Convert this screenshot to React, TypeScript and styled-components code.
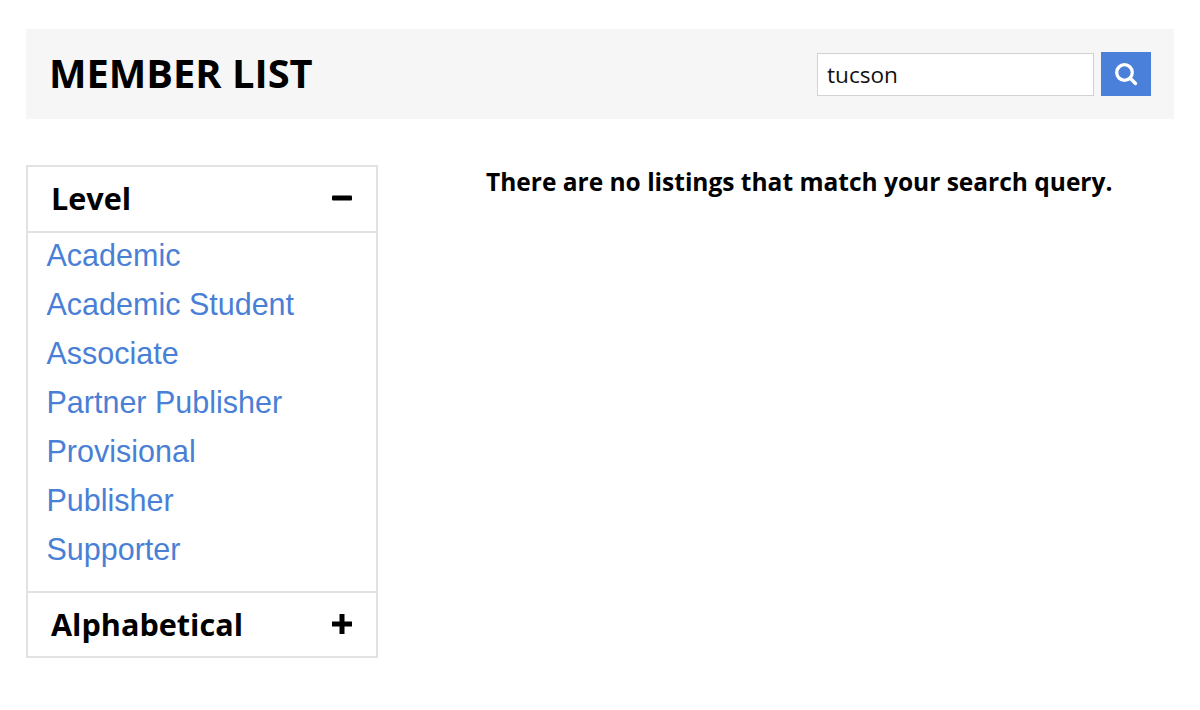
import React from "react";
import styled, { createGlobalStyle } from "styled-components";

const Global = createGlobalStyle`
  html, body { margin: 0; padding: 0; background: #fff; }
  body { width: 1200px; height: 710px; overflow: hidden; font-family: "Open Sans", sans-serif; }
`;
const Page = styled.div`
  padding: 29px 26px 0;
  box-sizing: border-box;
`;
const Header = styled.header`
  height: 90px;
  background: #f6f6f6;
  display: flex;
  align-items: center;
  justify-content: space-between;
  padding: 0 23px 0 23px;
`;
const Title = styled.h1`
  margin: 0 0 2px;
  font-size: 39.8px;
  line-height: 50px;
  font-weight: 700;
  color: #000;
`;
const Search = styled.form`
  display: flex;
  align-items: center;
  gap: 7px;
`;
const SearchInput = styled.input`
  width: 277px;
  height: 43px;
  box-sizing: border-box;
  border: 1px solid #d2d2d2;
  background: #fff;
  padding: 0 9px;
  font: 400 22.6px "Open Sans", sans-serif;
  color: #111;
  outline: none;
`;
const SearchButton = styled.button`
  width: 50px;
  height: 44px;
  border: 0;
  padding: 0;
  background: #4a80d9;
  display: flex;
  align-items: center;
  justify-content: center;
`;
const Columns = styled.div`
  display: flex;
  align-items: flex-start;
  margin-top: 46px;
`;
const Sidebar = styled.aside`
  width: 352px;
  box-sizing: border-box;
  border: 2px solid #e2e2e2;
`;
const SectionHead = styled.div<{ $top?: boolean }>`
  height: ${p => (p.$top ? 66 : 65)}px;
  box-sizing: border-box;
  display: flex;
  align-items: center;
  justify-content: space-between;
  padding: 0 24px 2px 23px;
  font-size: 30.6px;
  font-weight: 700;
  color: #000;
  border-${p => (p.$top ? "bottom" : "top")}: 2px solid #e2e2e2;
`;
const List = styled.ul`
  list-style: none;
  margin: -1px 0 0;
  padding: 0 0 16px 18.5px;
`;
const Item = styled.li`
  height: 49px;
  font: 400 30.5px/47px "Liberation Sans", Arial, sans-serif;
  color: #4a7fd6;
`;
const Message = styled.main`
  flex: 1;
  padding: 0 0 0 108px;
  font-size: 24.5px;
  line-height: 34px;
  font-weight: 700;
  color: #000;
`;

const items = ["Academic", "Academic Student", "Associate", "Partner Publisher", "Provisional", "Publisher", "Supporter"];

const SearchIcon = () => (
  <svg width="24" height="24" viewBox="0 0 24 24" fill="none" stroke="#fff" strokeWidth="3.3" strokeLinecap="round">
    <circle cx="10.5" cy="10.5" r="7.8" />
    <path d="M16.5 16.5l5 5" />
  </svg>
);
const Minus = () => (
  <svg width="20" height="20" viewBox="0 0 20 20"><rect y="7.5" width="20" height="5" rx="1" fill="#000" /></svg>
);
const Plus = () => (
  <svg width="20" height="20" viewBox="0 0 20 20"><path d="M0 7.5h7.5V0h5v7.5H20v5h-7.5V20h-5v-7.5H0z" fill="#000" /></svg>
);

export default function App() {
  return (
    <Page>
      <Global />
      <Header>
        <Title>MEMBER LIST</Title>
        <Search onSubmit={e => e.preventDefault()}>
          <SearchInput defaultValue="tucson" />
          <SearchButton type="button" aria-label="Search"><SearchIcon /></SearchButton>
        </Search>
      </Header>
      <Columns>
        <Sidebar>
          <SectionHead $top>Level <Minus /></SectionHead>
          <List>{items.map(i => <Item key={i}>{i}</Item>)}</List>
          <SectionHead>Alphabetical <Plus /></SectionHead>
        </Sidebar>
        <Message>There are no listings that match your search query.</Message>
      </Columns>
    </Page>
  );
}
